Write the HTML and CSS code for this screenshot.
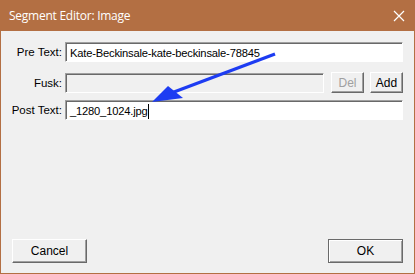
FILE: index.html
```html
<!DOCTYPE html>
<html lang="en">
<head>
  <meta charset="UTF-8">
  <title>Segment Editor: Image</title>
<link rel="stylesheet" href="styles.css">
</head>
<body>
<div class="window">
  <div class="titlebar">
    <p class="title">Segment Editor: Image</p>
    <svg class="close" width="12" height="12" viewBox="0 0 12 12"><path d="M1 1L11 11M11 1L1 11" stroke="#fff" stroke-width="1.2"/></svg>
  </div>
  <div class="content">
    <div class="row row-pre">
      <label class="lbl">Pre Text:</label>
      <div class="field">Kate-Beckinsale-kate-beckinsale-78845</div>
    </div>
    <div class="row row-fusk">
      <label class="lbl">Fusk:</label>
      <div class="field disabled"></div>
      <button class="btn btn-del" disabled>Del</button>
      <button class="btn btn-add">Add</button>
    </div>
    <div class="row row-post">
      <label class="lbl">Post Text:</label>
      <div class="field">_1280_1024.jpg<span class="caret"></span></div>
    </div>
    <div class="footer">
      <button class="btn btn-big">Cancel</button>
      <button class="btn btn-big btn-default">OK</button>
    </div>
  </div>
  <!-- annotation arrow drawn on top of the dialog -->
  <svg class="arrow" width="415" height="274" viewBox="0 0 415 274">
    <path d="M275 54L166 95" stroke="#1d3cf2" stroke-width="3.2" fill="none"/>
    <path d="M152 102L168 86L183 98Z" fill="#1d3cf2"/>
  </svg>
</div>
</body>
</html>
```
FILE: styles.css
```css
* {
  box-sizing: border-box;
}

body {
  margin: 0;
  font-family: "Liberation Sans", Arial, sans-serif;
  font-size: 11px;
}

.window {
  position: relative;
  width: 415px;
  height: 274px;
  border: 1px solid #b36f43;
  border-top: none;
  background-color: #f0f0f0;
  display: flex;
  flex-direction: column;
}

.titlebar {
  height: 31px;
  margin: 0 -1px;
  background-color: #b36f43;
  display: flex;
  align-items: center;
  justify-content: space-between;
  padding: 0 10px 0 9px;
}

.title {
  margin: 0;
  color: #fff;
  font-family: "Open Sans", sans-serif;
  font-size: 12px;
  letter-spacing: -0.25px;
}

.content {
  flex: 1;
  display: flex;
  flex-direction: column;
  padding: 11px 11px 10px 0;
}

.row {
  display: flex;
  align-items: center;
  gap: 3px;
}

.row-fusk {
  margin-top: 10px;
}

.row-post {
  margin-top: 7px;
}

.lbl {
  width: 61px;
  text-align: right;
  color: #000;
  font-size: 11.5px;
}

.field {
  flex: 1;
  height: 20px;
  background-color: #fff;
  border: 1px solid #fff;
  border-top-color: #a0a0a0;
  border-left-color: #a0a0a0;
  box-shadow: inset 1px 1px 0 #696969;
  padding: 3px 4px 0;
  font-size: 11.2px;
  letter-spacing: -0.2px;
  line-height: 15px;
  white-space: nowrap;
}

.field.disabled {
  background-color: #f0f0f0;
}

.caret {
  display: inline-block;
  width: 1px;
  height: 15px;
  margin-left: 1px;
  background-color: #000;
  vertical-align: top;
}

.btn {
  font-family: "Liberation Sans", Arial, sans-serif;
  font-size: 12px;
  color: #000;
  background-color: #f0f0f0;
  border: 1px solid #696969;
  border-top-color: #fff;
  border-left-color: #fff;
  box-shadow: inset -1px -1px 0 #a0a0a0;
  padding: 0;
  height: 21px;
}

.btn-del {
  width: 33px;
  margin-left: 4px;
  color: #a0a0a0;
}

.btn-add {
  width: 33px;
  margin-left: 3px;
}

.footer {
  margin-top: auto;
  display: flex;
  justify-content: space-between;
  padding-left: 11px;
}

.btn-big {
  width: 75px;
  height: 24px;
}

.btn-default {
  border: 1px solid #6a6a6a;
  box-shadow: inset 1px 1px 0 #fff, inset -1px -1px 0 #a0a0a0;
}

.arrow {
  position: absolute;
  left: -1px;
  top: 0;
  pointer-events: none;
}
```
